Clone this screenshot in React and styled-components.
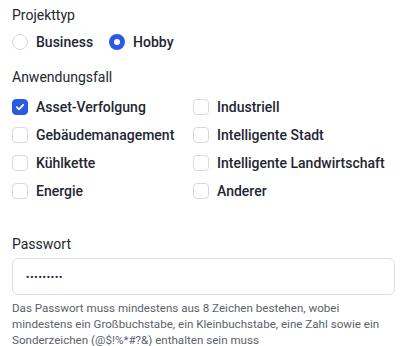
import React from 'react'
import styled, { createGlobalStyle } from 'styled-components'

const GlobalStyle = createGlobalStyle`
  body {
    margin: 0;
    background: #ffffff;
    font-family: Roboto, "Liberation Sans", sans-serif;
  }
`

const Form = styled.form`
  width: 383px;
  padding: 5px 11px 0 12px;
  display: flex;
  flex-direction: column;
`

const FieldLabel = styled.div`
  font-size: 14px;
  line-height: 20px;
  color: #23272e;
  margin-top: ${props => props.gap || 0}px;
`

const RadioRow = styled.div`
  display: flex;
  align-items: center;
  gap: 16px;
  height: 24px;
  margin-top: 5px;
`

const Option = styled.label`
  display: flex;
  align-items: center;
  gap: 8px;
  font-size: 14px;
  font-weight: 500;
  color: #1f2633;
  line-height: 20px;
  white-space: nowrap;
`

const Radio = styled.span`
  box-sizing: border-box;
  width: 16px;
  height: 16px;
  border-radius: 50%;
  background: #fff;
  border: ${props => (props.checked ? '5px solid #2a5ae3' : '1px solid #d6d9de')};
`

const CheckGrid = styled.div`
  display: grid;
  grid-template-columns: 181px 1fr;
  grid-auto-rows: 28px;
  margin-top: 6px;
`

const Box = styled.span`
  box-sizing: border-box;
  width: 16px;
  height: 16px;
  border-radius: 4px;
  display: flex;
  align-items: center;
  justify-content: center;
  background: ${props => (props.checked ? '#2a5ae3' : '#fff')};
  border: 1px solid ${props => (props.checked ? '#2a5ae3' : '#d6d9de')};
`

const Input = styled.div`
  box-sizing: border-box;
  height: 37px;
  margin-top: 4px;
  border: 1px solid #dcdfe4;
  border-radius: 6px;
  padding: 0 13px;
  display: flex;
  align-items: center;
  font-size: 9px;
  font-weight: 700;
  letter-spacing: 0.9px;
  color: #1f2937;
`

const Help = styled.p`
  margin: 5px 0 0;
  font-size: 11.6px;
  line-height: 16px;
  color: #5b6170;
`

const Check = () => (
  <svg width="10" height="10" viewBox="0 0 10 10" fill="none">
    <path d="M1.8 5.2 L4 7.3 L8.2 2.8" stroke="#fff" strokeWidth="1.8" strokeLinecap="round" strokeLinejoin="round" />
  </svg>
)

const Checkbox = ({ label, checked }) => (
  <Option>
    <Box checked={checked}>{checked && <Check />}</Box>
    {label}
  </Option>
)

const useCases = [
  ['Asset-Verfolgung', true],
  ['Industriell', false],
  ['Gebäudemanagement', false],
  ['Intelligente Stadt', false],
  ['Kühlkette', false],
  ['Intelligente Landwirtschaft', false],
  ['Energie', false],
  ['Anderer', false],
]

export default function App() {
  return (
    <>
      <GlobalStyle />
      <Form>
        <FieldLabel>Projekttyp</FieldLabel>
        <RadioRow>
          <Option>
            <Radio />
            Business
          </Option>
          <Option>
            <Radio checked />
            Hobby
          </Option>
        </RadioRow>
        <FieldLabel gap={13}>Anwendungsfall</FieldLabel>
        <CheckGrid>
          {useCases.map(([label, checked]) => (
            <Checkbox key={label} label={label} checked={checked} />
          ))}
        </CheckGrid>
        <FieldLabel gap={29}>Passwort</FieldLabel>
        <Input>•••••••••</Input>
        <Help>
          Das Passwort muss mindestens aus 8 Zeichen bestehen, wobei
          <br />
          mindestens ein Großbuchstabe, ein Kleinbuchstabe, eine Zahl sowie ein Sonderzeichen
          (@$!%*#?&) enthalten sein muss
        </Help>
      </Form>
    </>
  )
}
